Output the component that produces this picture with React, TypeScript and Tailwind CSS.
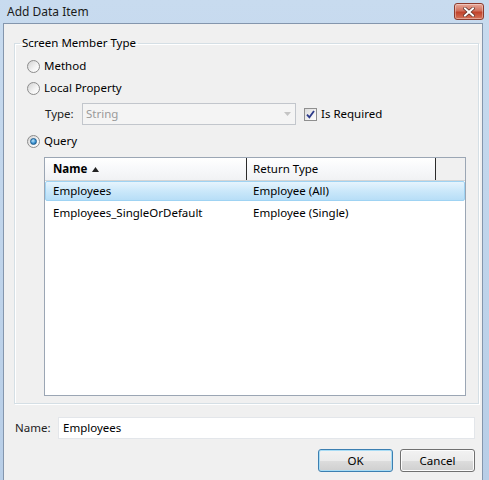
import React from "react";

function Radio({ checked }: { checked?: boolean }) {
  return (
    <span className="flex h-[13px] w-[13px] shrink-0 items-center justify-center rounded-full border border-[#8c8c8c] bg-[linear-gradient(135deg,#d2d2d2,#f4f4f4_60%,#ffffff)]">
      {checked && (
        <span className="h-[7px] w-[7px] rounded-full border border-[#1d5d8e] bg-[radial-gradient(circle_at_40%_35%,#bfe6fb,#3c94d4_55%,#1c5f96)]" />
      )}
    </span>
  );
}

function RadioRow({ label, checked }: { label: string; checked?: boolean }) {
  return (
    <div className="flex h-[22px] items-center gap-[4px]">
      <Radio checked={checked} />
      <span>{label}</span>
    </div>
  );
}

function CheckBox() {
  return (
    <span className="flex h-[13px] w-[13px] shrink-0 items-center justify-center border border-[#8f8f8f] bg-[linear-gradient(135deg,#dcdcdc,#ffffff)]">
      <svg width="9" height="9" viewBox="0 0 9 9">
        <path d="M1 4.6 L3.4 7.4 L8 1" fill="none" stroke="#2c3a8a" strokeWidth="1.8" />
      </svg>
    </span>
  );
}

function CloseButton() {
  return (
    <div className="flex h-[17px] w-[30px] items-center justify-center rounded-[3px] border border-[#8c3b2e] bg-[linear-gradient(#e9a99a,#d0705d_45%,#c1432c_55%,#d5735a)] shadow-[inset_0_0_0_1px_rgba(255,255,255,0.35)]">
      <svg width="12" height="10" viewBox="0 0 12 10">
        <path d="M2 1.5 L10 8.5 M10 1.5 L2 8.5" stroke="#5a2a22" strokeWidth="3.4" strokeLinecap="square" />
        <path d="M2 1.5 L10 8.5 M10 1.5 L2 8.5" stroke="#ffffff" strokeWidth="2" strokeLinecap="square" />
      </svg>
    </div>
  );
}

const rows = [
  { name: "Employees", type: "Employee (All)", selected: true },
  { name: "Employees_SingleOrDefault", type: "Employee (Single)" },
];

export default function App() {
  return (
    <div className="flex h-[480px] w-[489px] flex-col overflow-hidden bg-[linear-gradient(#c8dbef,#b8cee7)] font-['Noto_Sans','Segoe_UI',sans-serif] text-[11.5px] leading-[16px] text-black">
      {/* caption */}
      <div className="flex h-[23px] items-center justify-between pl-[7px] pr-[5px]">
        <span className="text-[12px] text-[#1b1b1b]">Add Data Item</span>
        <CloseButton />
      </div>

      <div className="flex flex-1 pl-[3px] pr-[6px]">
        <div className="flex flex-1 flex-col border-l border-r border-t border-[#8496ad] bg-[#f0f0f0] pl-[10px] pt-[11px]">
          <fieldset className="w-[462px] border border-[#d5dfe5] px-[12px] pb-[7px] pt-[4px] shadow-[inset_1px_1px_0_#ffffff,1px_1px_0_#ffffff]">
            <legend className="-ml-[7px] px-[2px] leading-[16px]">Screen Member Type</legend>

            <RadioRow label="Method" />
            <RadioRow label="Local Property" />

            <div className="mt-[4px] flex h-[22px] items-center">
              <span className="ml-[18px] w-[37px] text-[#222]">Type:</span>
              <div className="flex h-[22px] w-[214px] items-center justify-between border border-[#c2c6cc] bg-[#f4f4f4] pl-[3px] pr-[4px] text-[#9a9a9a]">
                <span>String</span>
                <svg width="7" height="4" viewBox="0 0 7 4">
                  <path d="M0 0 H7 L3.5 4 Z" fill="#c4c4c4" />
                </svg>
              </div>
              <div className="ml-[8px] flex items-center gap-[4px]">
                <CheckBox />
                <span>Is Required</span>
              </div>
            </div>

            <div className="mt-[5px]">
              <RadioRow label="Query" checked />
            </div>

            <div className="ml-[17px] mt-[5px] h-[239px] w-[422px] border border-[#9ba6b4] bg-white">
              <div className="flex h-[23px] border-b border-[#d5d5d5] bg-[linear-gradient(#ffffff,#f7f8fa_50%,#f1f2f4)]">
                <div className="flex w-[202px] items-center gap-[5px] border-r border-[#2b2b2b] pl-[8px] font-bold">
                  <span>Name</span>
                  <svg width="7" height="5" viewBox="0 0 7 5">
                    <path d="M0 5 H7 L3.5 0 Z" fill="#222" />
                  </svg>
                </div>
                <div className="flex w-[189px] items-center border-r border-[#2b2b2b] pl-[6px]">Return Type</div>
                <div className="flex-1 bg-[#f0f0f0]" />
              </div>

              <div className="flex flex-col gap-[2px]">
                {rows.map((r) => (
                  <div
                    key={r.name}
                    className={
                      r.selected
                        ? "flex h-[20px] items-center rounded-[2px] border border-[#9fd3f3] bg-[linear-gradient(#e6f4fd,#cbe8fa_50%,#b7def7)]"
                        : "flex h-[20px] items-center border border-transparent"
                    }
                  >
                    <span className="w-[202px] pl-[7px]">{r.name}</span>
                    <span className="pl-[5px]">{r.type}</span>
                  </div>
                ))}
              </div>
            </div>
          </fieldset>

          <div className="mt-[13px] flex h-[22px] w-[461px] items-center">
            <span className="w-[44px] pl-[1px] text-[#222]">Name:</span>
            <div className="flex h-[22px] flex-1 items-center border border-[#e3e6ea] bg-white pl-[4px]">
              Employees
            </div>
          </div>

          <div className="mt-[10px] flex w-[461px] justify-end gap-[7px]">
            <button className="h-[23px] w-[75px] rounded-[3px] border border-[#3c7fb1] bg-[linear-gradient(#f2f2f2,#ebebeb_50%,#dddddd_51%,#cfcfcf)] shadow-[inset_0_0_0_1px_#a8dcf5]">
              OK
            </button>
            <button className="h-[23px] w-[75px] rounded-[3px] border border-[#707070] bg-[linear-gradient(#f2f2f2,#ebebeb_50%,#dddddd_51%,#cfcfcf)] shadow-[inset_0_0_0_1px_#fcfcfc]">
              Cancel
            </button>
          </div>
        </div>
      </div>
    </div>
  );
}
